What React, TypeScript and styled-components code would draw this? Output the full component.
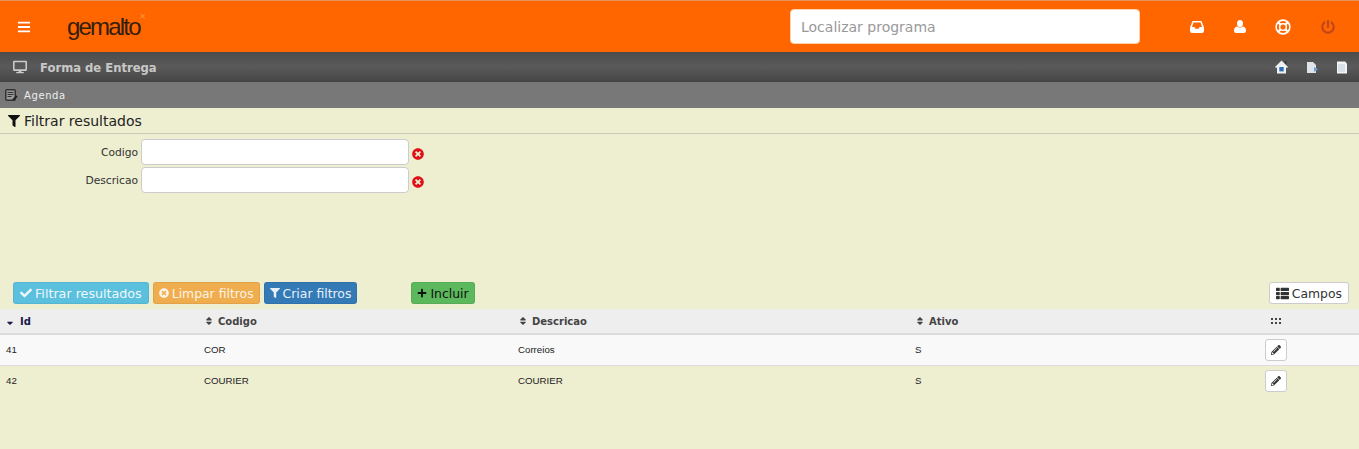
import React from 'react';
import styled, { createGlobalStyle } from 'styled-components';
import {
  FaBars, FaCheck, FaDesktop, FaFilter, FaPencilAlt, FaPlus,
  FaPowerOff, FaSort, FaSortDown, FaTimesCircle, FaThList,
} from 'react-icons/fa';

const GlobalStyle = createGlobalStyle`
  html, body { margin: 0; padding: 0; }
  body {
    background: #eeeed1;
    font-family: "DejaVu Sans", Verdana, sans-serif;
    color: #222;
    overflow: hidden;
  }
`;

const rows = [
  { id: '41', codigo: 'COR', descricao: 'Correios', ativo: 'S' },
  { id: '42', codigo: 'COURIER', descricao: 'COURIER', ativo: 'S' },
];

const App: React.FC = () => (
  <Page>
    <GlobalStyle />
    <TopBar>
      <MenuToggle><FaBars size={14} /></MenuToggle>
      <Logo>gemalto<LogoMark>×</LogoMark></Logo>
      <Search placeholder="Localizar programa" />
      <TopIcons>
        <TopIcon>
          <svg width="14" height="12" viewBox="0 0 14 12">
            <path d="M2.500 0h9L14 6.500V10a2 2 0 0 1-2 2H2a2 2 0 0 1-2-2V6.500z" fill="#fff" />
            <path d="M3.500 1.500h7L12 6H9.500l-.8 1.800H5.300L4.500 6H2z" fill="#ff6600" />
          </svg>
        </TopIcon>
        <TopIcon>
          <svg width="12" height="13" viewBox="0 0 12 13">
            <ellipse cx="6" cy="3.500" rx="3" ry="3.500" fill="#fff" />
            <path d="M3 6.500c1.500 1.300 4.500 1.300 6 0 2 .3 3 2 3 4.500 0 1.200-.8 2-2 2H2c-1.200 0-2-.8-2-2 0-2.500 1-4.200 3-4.500z" fill="#fff" />
          </svg>
        </TopIcon>
        <TopIcon>
          <svg width="16" height="16" viewBox="0 0 16 16" fill="none" stroke="#fff">
            <circle cx="8" cy="8" r="6.900" strokeWidth="1.600" />
            <circle cx="8" cy="8" r="3.300" strokeWidth="1.500" />
            <path d="M3 3l2.700 2.700M13 3l-2.700 2.700M3 13l2.700-2.700M13 13l-2.700-2.700" strokeWidth="2.200" />
          </svg>
        </TopIcon>
        <PowerIcon $muted><FaPowerOff size={14} /></PowerIcon>
      </TopIcons>
    </TopBar>

    <TitleBar>
      <FaDesktop size={14} color="#ccc" />
      <PageTitle>Forma de Entrega</PageTitle>
      <TitleActions>
        <svg width="13" height="14" viewBox="0 0 13 14">
          <path d="M6.500 .5 0 7l1 1 1-.8V13.500h9V7.200l1 .8 1-1z" fill="#eef1f4" />
          <path d="M10 1h1.500v3.500L10 3z" fill="#333" />
          <rect x="4.300" y="7" width="4.400" height="4.400" fill="#2f6fb5" />
        </svg>
        <svg width="12" height="13" viewBox="0 0 12 13">
          <path d="M1 1h6l3 3v8H1z" fill="#dfe4ea" />
          <path d="M8 6l4 2.500L8 11z" fill="#6fa3d8" />
        </svg>
        <svg width="12" height="13" viewBox="0 0 12 13">
          <path d="M1 .5h8l2 2v10H1z" fill="#f2f4f6" />
          <path d="M2 3h7v8H2z" fill="#d8e0e8" />
        </svg>
      </TitleActions>
    </TitleBar>

    <AgendaBar>
      <svg width="14" height="14" viewBox="0 0 14 14">
        <rect x="1" y="1" width="11" height="12" rx="2" fill="#333" />
        <rect x="2.500" y="2.500" width="8" height="9" fill="#999" />
        <path d="M3.500 4.500h6M3.500 6.500h6M3.500 8.500h4" stroke="#333" strokeWidth="1" />
        <path d="M9 12l4-4" stroke="#222" strokeWidth="2" />
      </svg>
      <AgendaLabel>Agenda</AgendaLabel>
    </AgendaBar>

    <FilterHeading>
      <FaFilter size={12} color="#111" />
      Filtrar resultados
    </FilterHeading>

    <FilterForm>
      <FieldRow>
        <FieldLabel>Codigo</FieldLabel>
        <FieldInput />
        <FaTimesCircle size={12} color="#e0101a" />
      </FieldRow>
      <FieldRow>
        <FieldLabel>Descricao</FieldLabel>
        <FieldInput />
        <FaTimesCircle size={12} color="#e0101a" />
      </FieldRow>
    </FilterForm>

    <Actions>
      <WideButton $bg="#5bc0de" $color="#eef8fb"><FaCheck size={12} />Filtrar resultados</WideButton>
      <ActionButton $bg="#f0ad4e" $color="#fdf3e4"><FaTimesCircle size={10} />Limpar filtros</ActionButton>
      <ActionButton $bg="#337ab7" $color="#e8f0f7"><FaFilter size={10} />Criar filtros</ActionButton>
      <IncludeButton $bg="#5cb85c" $color="#111"><FaPlus size={10} />Incluir</IncludeButton>
      <FieldsButton $bg="#fff" $color="#333"><FaThList size={13} />Campos</FieldsButton>
    </Actions>

    <TableHead>
      <HeadCell $active><FaSortDown size={10} />Id</HeadCell>
      <HeadCell><FaSort size={10} />Codigo</HeadCell>
      <HeadCell><FaSort size={10} />Descricao</HeadCell>
      <HeadCell><FaSort size={10} />Ativo</HeadCell>
      <HeadDots>
        <svg width="10" height="6" viewBox="0 0 10 6" fill="#444">
          <rect x="0" y="0" width="2" height="2" /><rect x="4" y="0" width="2" height="2" /><rect x="8" y="0" width="2" height="2" />
          <rect x="0" y="4" width="2" height="2" /><rect x="4" y="4" width="2" height="2" /><rect x="8" y="4" width="2" height="2" />
        </svg>
      </HeadDots>
    </TableHead>
    {rows.map((row, i) => (
      <TableRow key={row.id} $odd={i % 2 === 0}>
        <Cell>{row.id}</Cell>
        <Cell>{row.codigo}</Cell>
        <Cell>{row.descricao}</Cell>
        <Cell>{row.ativo}</Cell>
        <Cell><EditButton><FaPencilAlt size={10} /></EditButton></Cell>
      </TableRow>
    ))}
  </Page>
);

export default App;


// Styled Components
const Page = styled.div`
  width: 1359px;
  height: 449px;
  overflow: hidden;
`;

const TopBar = styled.header`
  height: 51px;
  box-sizing: content-box;
  border-top: 1px solid #e8935a;
  background: #ff6600;
  display: flex;
  align-items: center;
  padding-left: 17px;
`;

const MenuToggle = styled.div`
  width: 14px;
  flex-shrink: 0;
  display: flex;
  color: #fff;
`;

const Logo = styled.div`
  position: relative;
  flex-shrink: 0;
  margin-left: 36px;
  margin-top: 1px;
  width: 72px;
  font-family: "Liberation Sans", Arial, sans-serif;
  font-size: 24px;
  letter-spacing: -1.8px;
  color: #33200f;
`;

const LogoMark = styled.span`
  position: absolute;
  top: -3px;
  right: -7px;
  font-size: 11px;
  letter-spacing: 0;
  color: #f59a3c;
`;

const Search = styled.input`
  flex-shrink: 0;
  margin-left: 651px;
  width: 350px;
  height: 35px;
  box-sizing: border-box;
  border: 1px solid #ffd2b0;
  border-radius: 4px;
  padding: 0 10px;
  font-family: "DejaVu Sans", Verdana, sans-serif;
  font-size: 14px;
  background: #fff;
  &::placeholder { color: #999; opacity: 1; }
`;

const TopIcons = styled.div`
  margin-left: 35px;
  display: flex;
  align-items: center;
`;

const TopIcon = styled.div<{ $muted?: boolean }>`
  width: 43px;
  display: flex;
  justify-content: center;
  color: ${(p) => (p.$muted ? '#c4451c' : '#fff')};
`;

const PowerIcon = styled(TopIcon)`
  margin-left: 2px;
`;

const TitleBar = styled.div`
  height: 30px;
  background: linear-gradient(#4c4c4c, #5a5a5a 50%, #444);
  display: flex;
  align-items: center;
  padding: 0 11px 0 13px;
`;

const PageTitle = styled.div`
  margin-left: 13px;
  margin-top: 1px;
  font-size: 11.600px;
  font-weight: bold;
  color: #c8c8c8;
`;

const TitleActions = styled.div`
  margin-left: auto;
  display: flex;
  align-items: center;
  gap: 18px;
`;

const AgendaBar = styled.div`
  height: 26px;
  background: #787878;
  display: flex;
  align-items: center;
  padding-left: 4px;
`;

const AgendaLabel = styled.span`
  margin-left: 6px;
  font-size: 10px;
  letter-spacing: 0.6px;
  color: #eee;
`;

const FilterHeading = styled.div`
  height: 25px;
  border-bottom: 1px solid #c9c9b8;
  display: flex;
  align-items: center;
  gap: 4px;
  padding-left: 8px;
  font-size: 14px;
  color: #222;
`;

const FilterForm = styled.div`
  padding-top: 5px;
  height: 148px;
  box-sizing: border-box;
  display: flex;
  flex-direction: column;
  gap: 2px;
`;

const FieldRow = styled.div`
  display: flex;
  align-items: center;
  height: 26px;
  & > svg { margin: 3px 0 0 3px; }
`;

const FieldLabel = styled.label`
  width: 138px;
  text-align: right;
  font-size: 10.700px;
  color: #333;
`;

const FieldInput = styled.input`
  margin-left: 3px;
  width: 268px;
  height: 26px;
  box-sizing: border-box;
  border: 1px solid #ccc;
  border-radius: 4px;
  background: #fff;
`;

const Actions = styled.div`
  height: 22px;
  display: flex;
  align-items: center;
  gap: 4px;
  padding: 0 10px 0 13px;
`;

const ActionButton = styled.button<{ $bg: string; $color: string }>`
  height: 22px;
  box-sizing: border-box;
  display: inline-flex;
  align-items: center;
  gap: 3px;
  padding: 0 5px;
  border: 1px solid rgba(0, 0, 0, 0.06);
  border-radius: 3px;
  background: ${(p) => p.$bg};
  color: ${(p) => p.$color};
  font-family: "DejaVu Sans", Verdana, sans-serif;
  font-size: 12.400px;
  white-space: nowrap;
`;

const WideButton = styled(ActionButton)`
  padding: 0 6px;
  font-size: 12.700px;
`;

const IncludeButton = styled(ActionButton)`
  margin-left: 50px;
`;

const FieldsButton = styled(ActionButton)`
  margin-left: auto;
  padding: 0 6px;
  border-color: #ccc;
`;

const tableColumns = '199px 314px 397px 350px 99px';

const TableHead = styled.div`
  margin-top: 5px;
  height: 24px;
  border-bottom: 2px solid #ddd;
  background: #eee;
  display: grid;
  grid-template-columns: ${tableColumns};
  align-items: center;
`;

const HeadCell = styled.div<{ $active?: boolean }>`
  display: flex;
  align-items: center;
  gap: ${(p) => (p.$active ? 5 : 4)}px;
  padding-left: 5px;
  font-size: 10px;
  font-weight: bold;
  color: ${(p) => (p.$active ? '#1a1a4a' : '#444')};
`;

const HeadDots = styled.div`
  padding-left: 11px;
  display: flex;
`;

const TableRow = styled.div<{ $odd: boolean }>`
  height: 30px;
  border-bottom: 1px solid #ddd;
  background: ${(p) => (p.$odd ? '#f9f9f9' : 'transparent')};
  display: grid;
  grid-template-columns: ${tableColumns};
  align-items: center;
  &:last-child { border-bottom: none; }
`;

const Cell = styled.div`
  padding-left: 5px;
  font-family: "Liberation Sans", Arial, sans-serif;
  font-size: 9.700px;
  color: #222;
  &:first-child { padding-left: 6px; }
  &:not(:last-child) { padding-bottom: 2px; }
`;

const EditButton = styled.button`
  width: 22px;
  height: 22px;
  padding: 0;
  display: flex;
  align-items: center;
  justify-content: center;
  border: 1px solid #ccc;
  border-radius: 3px;
  background: #fff;
  color: #333;
`;
